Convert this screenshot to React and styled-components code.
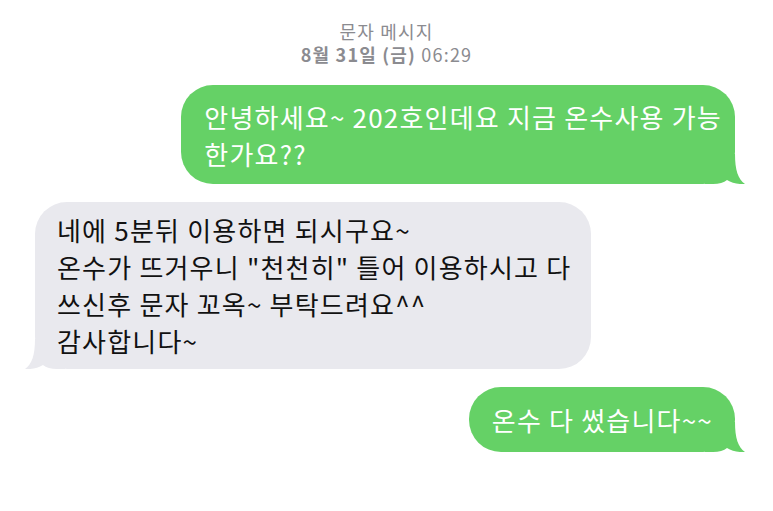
import React from 'react';
import styled, { createGlobalStyle } from 'styled-components';

const GlobalStyle = createGlobalStyle`
  html, body {
    margin: 0;
    padding: 0;
    background: #ffffff;
  }
  body {
    font-family: "Noto Sans CJK KR", "Noto Sans", sans-serif;
  }
`;

const messages = [
  { id: 1, mine: true, lines: ['안녕하세요~ 202호인데요 지금 온수사용 가능', '한가요??'] },
  {
    id: 2,
    mine: false,
    lines: [
      '네에 5분뒤 이용하면 되시구요~',
      '온수가 뜨거우니 "천천히" 틀어 이용하시고 다',
      '쓰신후 문자 꼬옥~ 부탁드려요^^',
      '감사합니다~',
    ],
  },
  { id: 3, mine: true, lines: ['온수 다 썼습니다~~'] },
];

export default function App() {
  return (
    <>
      <GlobalStyle />
      <Screen>
        <Header>
          <Title>문자 메시지</Title>
          <Stamp>
            <b>8월 31일 (금)</b> 06:29
          </Stamp>
        </Header>
        <Thread>
          {messages.map(m => (
            <Row key={m.id} mine={m.mine}>
              <Bubble mine={m.mine} lines={m.lines.length}>
                <Tail mine={m.mine} viewBox="0 0 40 30" width="40" height="30">
                  <path d="M0 30 L0 0 L30 0 C30 16 33 25 40 30 C33 30.5 27 29 22 26 C19 28.5 14 30 8 30 Z" />
                </Tail>
                {m.lines.map((l, i) => (
                  <Line key={i}>{l}</Line>
                ))}
              </Bubble>
            </Row>
          ))}
        </Thread>
      </Screen>
    </>
  );
}

const Screen = styled.div`
  width: 773px;
  height: 511px;
  overflow: hidden;
  background: #fff;
  padding: 20px 38px 0 35px;
  box-sizing: border-box;
`;

const Header = styled.div`
  display: flex;
  flex-direction: column;
  align-items: center;
  color: #8b8b90;
  font-size: 18px;
  letter-spacing: 1.2px;
  line-height: 23px;
  margin-left: 3px;
`;

const Title = styled.div``;

const Stamp = styled.div`
  b {
    font-weight: 600;
  }
`;

const Thread = styled.div`
  display: flex;
  flex-direction: column;
  gap: 18px;
  margin-top: 19px;
`;

const Row = styled.div`
  display: flex;
  justify-content: ${({ mine }) => (mine ? 'flex-end' : 'flex-start')};
`;

const Bubble = styled.div`
  position: relative;
  border-radius: 32px;
  padding: ${({ mine, lines }) => (mine ? (lines > 1 ? '13px 13px 12px 23px' : '14px 22px 14px 23px') : '9px 20px 10px 22px')};
  background: ${({ mine }) => (mine ? '#65d166' : '#e9e9ee')};
  color: ${({ mine }) => (mine ? '#ffffff' : '#111111')};
  fill: ${({ mine }) => (mine ? '#65d166' : '#e9e9ee')};
  font-size: 26px;
  letter-spacing: 1.2px;
  line-height: 37px;
`;

const Line = styled.div`
  position: relative;
  white-space: nowrap;
`;

const Tail = styled.svg`
  position: absolute;
  bottom: 0;
  ${({ mine }) => (mine ? 'right: -10px;' : 'left: -10px; transform: scaleX(-1);')}
  display: block;
`;
